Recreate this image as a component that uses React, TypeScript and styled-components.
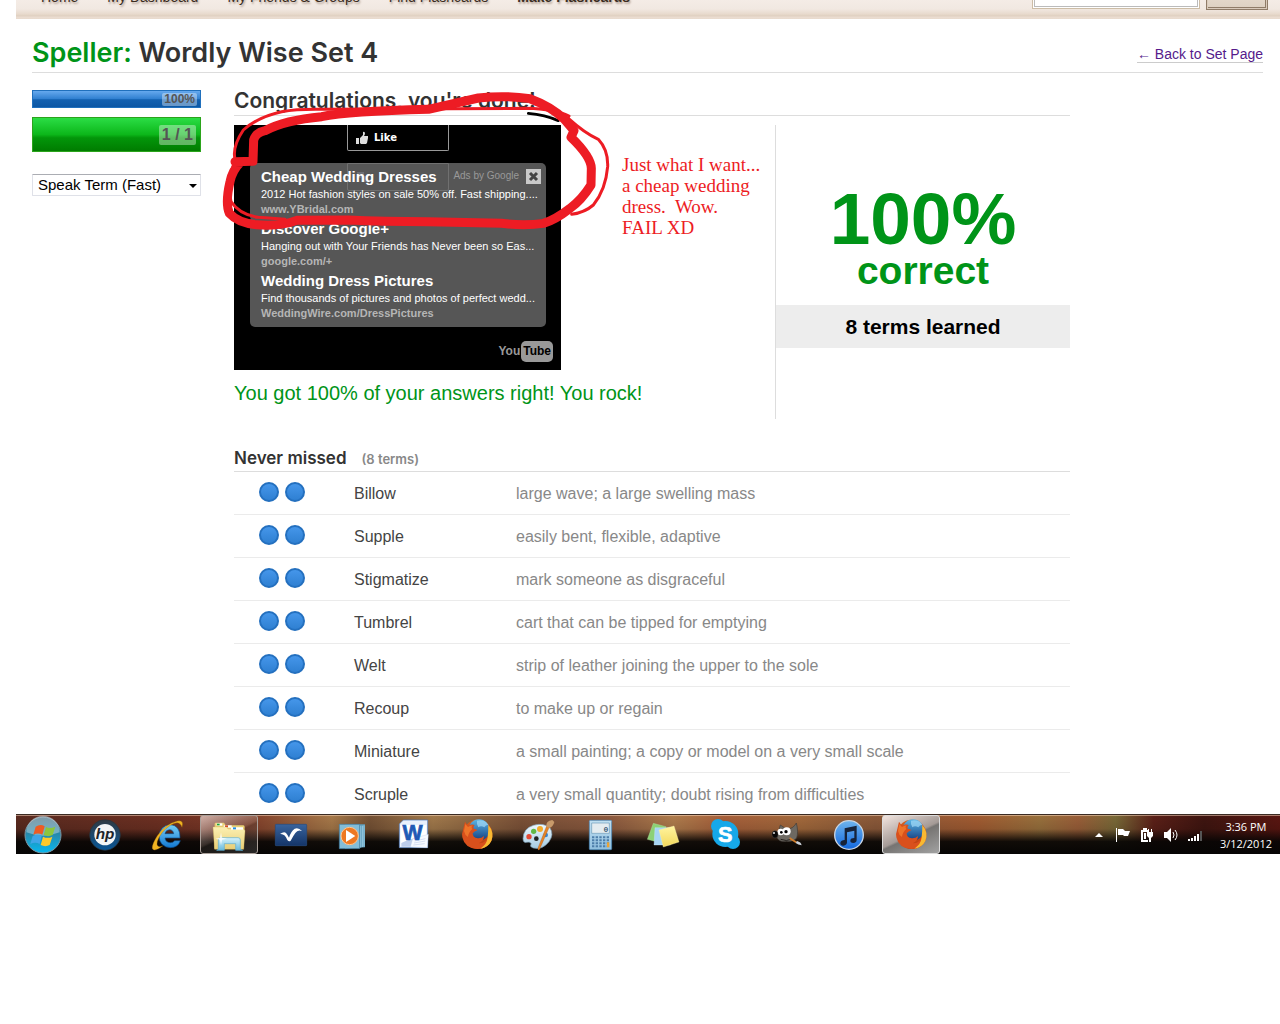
import React from "react";
import styled, { createGlobalStyle, css } from "styled-components";

const sans = `"Liberation Sans", Arial, sans-serif`;
const display = `"Century Gothic", Inter, sans-serif`;
const green = "#009418";

const GlobalStyle = createGlobalStyle`
  * { box-sizing: border-box; }
  body { margin: 0; background: #fff; font-family: ${sans}; color: #333; }
  h1, h2, h3, p { margin: 0; }
`;

const Screen = styled.div`
  margin-left: 16px;
`;

const TopBar = styled.header`
  display: flex;
  justify-content: space-between;
  align-items: flex-end;
  height: 19px;
  padding: 0 12px 0 25px;
  overflow: hidden;
  background: linear-gradient(#f4ece6 0, #f1e8e1 9px, #e8dacd 14px, #dfcfc0 16px, #ebddd1 17px, #e8dacd 19px);
`;

const Nav = styled.nav`
  display: flex;
  gap: 29px;
  padding-bottom: 12px;
`;

const NavLink = styled.a<{ $strong?: boolean }>`
  font-size: 14px;
  line-height: 20px;
  font-weight: ${(p) => (p.$strong ? 700 : 400)};
  color: #3a2c22;
  text-decoration: none;
  text-shadow: 1px 2px 2px rgba(90, 60, 40, 0.4);
`;

const Search = styled.form`
  display: flex;
  align-items: flex-end;
  gap: 6px;
  padding-bottom: 9px;
`;

const SearchBox = styled.input`
  width: 168px;
  height: 28px;
  margin-bottom: 1px;
  border: 1px solid #cdbda6;
  outline: 1px solid #bbb;
  outline-offset: -3px;
  background: #fff;
`;

const SearchButton = styled.button`
  width: 62px;
  height: 30px;
  border: 1px solid #8f7c68;
  box-shadow: inset 0 0 0 1px #d9cabb, inset -1px -1px 0 1px #8f7c68;
  background: linear-gradient(#eee4da, #ddd0c1);
`;

const Page = styled.main`
  padding: 17px 17px 0 16px;
`;

const TitleRow = styled.div`
  display: flex;
  justify-content: space-between;
  align-items: flex-start;
  height: 37px;
  border-bottom: 1px solid #ddd;
`;

const Title = styled.h1`
  font: 600 27px/34px ${display};
  span { color: ${green}; }
`;

const BackLink = styled.a`
  margin-top: 10px;
  font-size: 14px;
  line-height: 16px;
  color: #551a8b;
  text-decoration: none;
  border-bottom: 1px solid #ccc;
`;

const Columns = styled.div`
  display: flex;
  gap: 33px;
  padding-top: 17px;
`;

const Sidebar = styled.aside`
  flex: 0 0 169px;
`;

const Meter = styled.div<{ $big?: boolean }>`
  display: flex;
  justify-content: flex-end;
  align-items: center;
  font-weight: 700;
  color: #555;
  ${(p) =>
    p.$big
      ? css`
          height: 35px;
          margin: 9px 0 22px;
          padding-right: 4px;
          font-size: 16px;
          border: 1px solid #2ba41b;
          background: linear-gradient(#2bdd45 0, #0cb71a 50%, #03960a 60%, #007c00 100%);
        `
      : css`
          height: 18px;
          padding-right: 3px;
          font-size: 12px;
          border: 1px solid #2070bd;
          background: linear-gradient(#66a9ee 0, #2f7fd0 50%, #1361b0 54%, #0c57a4 100%);
        `}
`;

const MeterLabel = styled.span<{ $big?: boolean }>`
  border-radius: 2px;
  background: rgba(255, 255, 255, 0.38);
  padding: 0 ${(p) => (p.$big ? 3 : 2)}px;
  line-height: ${(p) => (p.$big ? 20 : 13)}px;
`;

const SelectWrap = styled.label`
  position: relative;
  display: block;
  &::after {
    content: "";
    position: absolute;
    right: 4px;
    top: 10px;
    border: 4px solid transparent;
    border-top-color: #000;
    border-bottom: 0;
  }
`;

const Select = styled.select`
  appearance: none;
  display: block;
  width: 100%;
  height: 22px;
  padding: 0 5px;
  border: 1px solid #dfe1e8;
  border-top-color: #abadb3;
  border-radius: 1px;
  background: #fff;
  color: #000;
  font: 15px/20px ${sans};
`;

const Results = styled.section`
  position: relative;
  flex: 1;
  max-width: 836px;
`;

const Heading = styled.h2`
  height: 26px;
  border-bottom: 1px solid #ddd;
  font: 600 21px/22px ${display};
`;

const Summary = styled.div`
  display: flex;
  height: 294px;
  margin-top: 9px;
`;

const SummaryMain = styled.div`
  flex: 1;
`;

const Video = styled.div`
  position: relative;
  width: 327px;
  height: 245px;
  background: #000;
`;

const VideoButton = styled.button<{ $lower?: boolean }>`
  position: absolute;
  left: 113px;
  top: ${(p) => (p.$lower ? 38 : 0)}px;
  display: flex;
  align-items: center;
  gap: 5px;
  width: 102px;
  height: ${(p) => (p.$lower ? 28 : 26)}px;
  padding: 0 7px;
  border: 1px solid #999;
  border-top-width: ${(p) => (p.$lower ? 1 : 0)}px;
  border-radius: 0 0 2px 2px;
  background: none;
  color: #fff;
  font: 700 10px/14px "DejaVu Sans", Verdana, sans-serif;
`;

const Ads = styled.div`
  position: absolute;
  left: 16px;
  top: 38px;
  width: 296px;
  height: 164px;
  padding: 4px 0 0 11px;
  border-radius: 5px;
  background: rgba(103, 103, 103, 0.83);
`;

const Ad = styled.div`
  height: 52px;
  white-space: nowrap;
`;

const AdTitle = styled.div`
  font: 700 15px/20px ${sans};
  color: #fff;
`;

const AdText = styled.div`
  font: 11px/15px ${sans};
  color: #fff;
`;

const AdUrl = styled.div`
  font: 700 11px/15px ${sans};
  color: #b5b5b5;
`;

const AdsBy = styled.div`
  position: absolute;
  right: 5px;
  top: 5px;
  display: flex;
  align-items: center;
  gap: 7px;
  font: 10px/16px ${sans};
  color: #999;
`;

const CloseButton = styled.button`
  display: grid;
  place-items: center;
  width: 15px;
  height: 15px;
  padding: 0;
  border: 0;
  background: #c9c9c9;
`;

const YouTube = styled.div`
  position: absolute;
  right: 8px;
  bottom: 8px;
  display: flex;
  align-items: center;
  gap: 1px;
  font: 700 12px/21px ${sans};
  color: #999;
  span {
    padding: 0 2px;
    border-radius: 5px;
    background: #999;
    color: #000;
  }
`;

const Praise = styled.p`
  margin-top: 12px;
  font-size: 20px;
  line-height: 23px;
  color: ${green};
`;

const Score = styled.div`
  flex: 0 0 295px;
  padding-top: 57px;
  border-left: 1px solid #ddd;
  text-align: center;
  font-weight: 700;
  color: ${green};
`;

const Percent = styled.div`
  font-size: 73px;
  line-height: 73px;
`;

const Correct = styled.div`
  font-size: 39px;
  line-height: 32px;
`;

const Learned = styled.div`
  margin-top: 18px;
  background: #ededed;
  color: #000;
  font-size: 21px;
  line-height: 43px;
`;

const ListHeading = styled.h3`
  display: flex;
  align-items: baseline;
  gap: 15px;
  height: 25px;
  margin-top: 27px;
  font: 600 17px/24px ${display};
  small { font-size: 13px; color: #888; }
`;

const Terms = styled.table`
  width: 100%;
  border-spacing: 0;
  table-layout: fixed;
  border-top: 1px solid #ddd;
  font-size: 16px;
  line-height: 20px;
  td { height: 43px; padding: 12px 0 0; vertical-align: top; color: #888; border-bottom: 1px solid #ebebeb; }
  td:first-child { width: 120px; padding: 10px 0 0 25px; }
  td:nth-child(2) { width: 162px; color: #444; }
  tr:last-child td { height: 41px; border: 0; }
`;

const Dots = styled.span`
  display: flex;
  gap: 6px;
`;

const Dot = styled.i`
  width: 20px;
  height: 20px;
  border: 2px solid #2470bf;
  border-radius: 50%;
  background: linear-gradient(#4596ea, #2f80d2);
`;

const Scribble = styled.svg`
  position: absolute;
  left: -19px;
  top: -10px;
  width: 400px;
  height: 180px;
  pointer-events: none;
`;

const Note = styled.p`
  position: absolute;
  left: 388px;
  top: 64px;
  font: 19px/21px "Liberation Serif", "Times New Roman", serif;
  white-space: pre;
  color: #ed1c24;
`;

const Taskbar = styled.footer`
  display: flex;
  justify-content: space-between;
  height: 40px;
  border-top: 1px solid #3b2b23;
  box-shadow: inset 0 1px 0 rgba(255, 225, 200, 0.5);
  background:
    linear-gradient(rgba(0, 0, 0, 0) 0, rgba(0, 0, 0, 0.12) 36%, rgba(6, 5, 4, 0.93) 68%, #060504 100%),
    linear-gradient(90deg, #5b2b20 0, #6d3022 11%, #813b28 18%, #a87a4a 25%, #765235 28%, #a27a4c 33%, #7c5238 40%, #8e5b40 47%, #b07d4d 52%, #a8603b 56%, #a46a3c 62%, #8c5a3a 68%, #a35c32 76%, #99713d 81%, #9b5f39 84%, #7a6a38 87%, #5c2018 90%, #3f1510 94%, #5a1611 100%);
`;

const Apps = styled.div`
  display: flex;
`;

const AppButton = styled.button<{ $kind?: "start" | "open" | "front" }>`
  display: grid;
  place-items: center;
  width: ${(p) => (p.$kind === "start" ? 54 : 58)}px;
  height: 39px;
  margin: 0 ${(p) => (p.$kind === "start" ? 4 : 2)}px 0 ${(p) => (p.$kind === "start" ? 0 : 2)}px;
  padding: 0;
  border: 1px solid transparent;
  border-radius: 3px;
  background: none;
  ${(p) =>
    p.$kind === "open" &&
    css`
      border-color: #aaa09a;
      background: linear-gradient(155deg, rgba(255, 240, 235, 0.65), rgba(160, 140, 130, 0.3) 48%, rgba(70, 65, 60, 0.3) 52%, rgba(120, 120, 120, 0.3));
    `}
  ${(p) =>
    p.$kind === "front" &&
    css`
      border-color: #ddd;
      background: linear-gradient(155deg, #f3e5df, #a49a96 50%, #767472 54%, #a2a2a2);
    `}
`;

const Icon = styled.svg`
  display: block;
  width: 40px;
  height: 40px;
  margin: -2px 0;
`;

const Tray = styled.div`
  display: flex;
  align-items: center;
  gap: 8px;
  padding-right: 8px;
`;

const TrayIcon = styled.svg`
  width: 16px;
  height: 16px;
  fill: #fff;
`;

const Clock = styled.time`
  margin-left: 9px;
  text-align: center;
  color: #fff;
  font: 11px/17px "Open Sans", "Noto Sans", sans-serif;
`;

const terms = [
  ["Billow", "large wave; a large swelling mass"],
  ["Supple", "easily bent, flexible, adaptive"],
  ["Stigmatize", "mark someone as disgraceful"],
  ["Tumbrel", "cart that can be tipped for emptying"],
  ["Welt", "strip of leather joining the upper to the sole"],
  ["Recoup", "to make up or regain"],
  ["Miniature", "a small painting; a copy or model on a very small scale"],
  ["Scruple", "a very small quantity; doubt rising from difficulties"],
];

const ads = [
  ["Cheap Wedding Dresses", "2012 Hot fashion styles on sale 50% off. Fast shipping....", "www.YBridal.com"],
  ["Discover Google+", "Hanging out with Your Friends has Never been so Eas...", "google.com/+"],
  ["Wedding Dress Pictures", "Find thousands of pictures and photos of perfect wedd...", "WeddingWire.com/DressPictures"],
];

const Firefox = () => (
  <>
    <circle cx="62" cy="58" r="44" fill="url(#ffOrange)" />
    <circle cx="66" cy="45" r="32" fill="url(#ffBlue)" />
    <path d="M60 17q22-5 34 12-8 0-12 8-10-6-18 0-6-10-4-20z" fill="#9ed5f4" opacity=".75" />
    <path d="M18 46l6-26 9 13q10-7 20-3-5 5-3 11 8 1 11 5-9 3-14 9 0 14 15 15 11 1 19-7 0 16-16 22 24 1 31-27 2-14-2-28 16 24 10 46-12 26-43 26-38-2-45-35-2-12 2-21z" fill="#d9501c" />
    <path d="M94 30q19 22 9 48-9 19-33 23 20-13 22-34 2-18 2-37z" fill="#f9b932" />
    <path d="M21 48l4-21 8 9q8-5 14-5-6 6-1 11-12 10-13 24-10-6-12-18z" fill="#ee7429" />
  </>
);

const appIcons: { name: string; kind?: "start" | "open" | "front"; art: React.ReactNode }[] = [
  {
    name: "Start",
    kind: "start",
    art: (
      <>
        <circle cx="60" cy="60" r="54" fill="url(#orb)" stroke="#7d96a3" strokeWidth="3" />
        <path d="M10 52a50 50 0 01100 0q-50 20-100 0z" fill="#dcecf4" opacity=".42" />
        <path d="M38 35q14-9 27-1l-7 25q-13-7-27 0z" fill="#ee5b24" />
        <path d="M69 36q12 7 28-1l-8 25q-13 7-27 0z" fill="#8cc63e" />
        <path d="M29 63q14-8 27 0l-6 24q-13-7-28 0z" fill="#3fa5e8" />
        <path d="M60 65q14 7 28 0l-8 25q-13 7-27 0z" fill="#fdc92b" />
      </>
    ),
  },
  {
    name: "HP",
    art: (
      <>
        <circle cx="60" cy="60" r="46" fill="url(#hp)" stroke="#29333b" strokeWidth="2" />
        <circle cx="60" cy="59" r="32" fill="#f3f5f6" />
        <text x="60" y="72" textAnchor="middle" fontFamily="Liberation Sans" fontWeight="700" fontStyle="italic" fontSize="46" fill="#1c2429">hp</text>
      </>
    ),
  },
  {
    name: "Internet Explorer",
    art: (
      <>
        <path d="M99 69H54q2 14 16 14 9 0 13-6h17q-7 21-30 21-32-2-34-34 2-32 34-35 30 2 29 40zM54 56h26q-2-12-13-12-11 1-13 12z" fill="url(#ie)" stroke="#0a4b8a" strokeWidth="2" />
        <path d="M105 37q7-23-14-19-35 8-60 44-26 42-8 43 10-1 24-12-21 8-16-14 11-30 39-48 27-18 35 6z" fill="#f0b322" stroke="#9b6a0a" strokeWidth="1" />
      </>
    ),
  },
  {
    name: "Windows Explorer",
    kind: "open",
    art: (
      <>
        <path d="M17 27q0-4 4-4h24l5 8h53q4 0 4 5l-4 65H16z" fill="#e8cf74" />
        <path d="M23 25h17v7H23z" fill="#fff" /><path d="M24 26h8v5h-8z" fill="#19a63a" />
        <path d="M44 31h24v7H44z" fill="#fff" /><path d="M48 31h9v6h-9z" fill="#d44b24" />
        <path d="M66 37h36v8H66z" fill="#fff" /><path d="M72 37h9v6h-9z" fill="#268de0" />
        <path d="M12 36h40l5 6h47l4 5-4 56H17z" fill="url(#folder)" stroke="#d6b95a" />
        <path d="M66 38h36v6H66z" fill="#fff" /><path d="M72 38h9v5h-9z" fill="#268de0" />
        <path d="M28 103V75q0-7 7-7h52q7 0 7 7v28l7 3H80V86H46v20H23z" fill="url(#glass)" stroke="#5eaed0" strokeWidth="2" />
        <path d="M36 52l3 16 15 3-15 3-3 17-3-17-14-3 14-3z" fill="#fff" opacity=".8" />
      </>
    ),
  },
  {
    name: "Tasks",
    art: (
      <>
        <rect x="13" y="28" width="94" height="64" rx="2" fill="url(#navy)" stroke="#254b80" strokeWidth="2" />
        <path d="M27 57q12-9 18-3 5 6 9 14 6-20 17-27 11-5 22 7-13-5-20 6-6 8-14 23-5 4-10-2-7-20-22-18z" fill="#fff" />
      </>
    ),
  },
  {
    name: "Media Player",
    art: (
      <>
        <path d="M36 28h60v69l-60 4z" fill="#5d9dbc" /><path d="M88 32v64M93 31v64M83 32v66" stroke="#b8e1f1" strokeWidth="2" />
        <path d="M19 28h61v73H19z" fill="#83bdd8" stroke="#3e7ba1" strokeWidth="2" />
        <circle cx="50" cy="63" r="26" fill="#ed7821" stroke="#ffc48c" strokeWidth="3" />
        <path d="M39 45l28 18-28 18z" fill="#fff" />
      </>
    ),
  },
  {
    name: "Word",
    art: (
      <>
        <path d="M25 15h73v83H13V27z" fill="#e8f0fc" stroke="#4876b9" strokeWidth="2" />
        <path d="M17 30h77v64H17z" fill="#fff" />
        <path d="M19 84q40-20 75-14v25H19z" fill="#bdcdea" />
        <path d="M53 71l47-13-3 40-51-2z" fill="#f7faff" stroke="#b1c4e6" /><path d="M59 78l32-7M57 84l34-6M55 90l34-4" stroke="#c3d0ea" strokeWidth="2" />
        <text x="53" y="75" textAnchor="middle" fontFamily="Liberation Sans" fontWeight="700" fontSize="64" fill="#2059b5" stroke="#2059b5" strokeWidth="2">W</text>
      </>
    ),
  },
  { name: "Firefox", art: <Firefox /> },
  {
    name: "Paint",
    art: (
      <>
        <path d="M12 71q1-31 31-40 31-9 50 8 13 19-3 41-21 26-47 19-13-4-6-13-5-7-14-4-10 3-11-11z" fill="url(#palette)" stroke="#7998ad" strokeWidth="2" />
        <circle cx="52" cy="71" r="7" fill="#222" />
        <circle cx="30" cy="65" r="8" fill="#e44a35" /><circle cx="44" cy="49" r="8" fill="#62b846" />
        <circle cx="63" cy="42" r="9" fill="#f3ab2d" /><circle cx="80" cy="60" r="7" fill="#3486d2" />
        <path d="M91 36L61 104q-5 4-4-5L83 33z" fill="#e68426" stroke="#9a4f18" />
        <path d="M82 35q-2-18 18-20l6 6q-4 15-15 18z" fill="#c89a6a" />
      </>
    ),
  },
  {
    name: "Calculator",
    art: (
      <>
        <rect x="25" y="16" width="67" height="88" rx="3" fill="url(#calc)" stroke="#4685b8" strokeWidth="2" />
        <path d="M32 24h53v31H32z" fill="#e4ecf0" stroke="#6c9ab8" strokeWidth="2" />
        <text x="82" y="50" textAnchor="end" fontFamily="Liberation Mono" fontWeight="700" fontSize="24" fill="#42617c">0</text>
        <path d="M33 67h53M33 76h53M33 85h53M33 94h45" stroke="#4e7faa" strokeWidth="6" strokeDasharray="7 4" />
        <path d="M78 82h7v15h-7z" fill="#eda332" />
      </>
    ),
  },
  {
    name: "Sticky Notes",
    art: (
      <>
        <path d="M31 25l38 10-18 48-38-10z" fill="#8cd175" stroke="#b9e9a8" />
        <path d="M36 38h46v52H33z" fill="#a7d5f4" stroke="#d2edff" />
        <path d="M48 45l45-12 15 48-47 15z" fill="url(#note)" stroke="#fff5b0" />
      </>
    ),
  },
  {
    name: "Skype",
    art: (
      <>
        <g fill="#16a8e9"><circle cx="61" cy="57" r="39" /><circle cx="39" cy="33" r="21" /><circle cx="84" cy="81" r="21" /></g>
        <text x="61" y="80" textAnchor="middle" fontFamily="Liberation Sans" fontWeight="700" fontSize="65" fill="#fff" stroke="#fff" strokeWidth="2">S</text>
      </>
    ),
  },
  {
    name: "GIMP",
    art: (
      <>
        <path d="M34 53l6-23 18 12q20 1 30-18 7 27 1 45-10 12-31 10-19 3-28-10z" fill="#6d6962" stroke="#3f3b37" strokeWidth="2" />
        <circle cx="41" cy="51" r="10" fill="#fff" /><circle cx="59" cy="49" r="12" fill="#fff" />
        <circle cx="43" cy="52" r="4" /><circle cx="57" cy="50" r="5" />
        <ellipse cx="24" cy="58" rx="9" ry="11" fill="#070707" stroke="#555" /><circle cx="21" cy="54" r="3" fill="#ddd" />
        <path d="M41 73q18 7 31 0" fill="none" stroke="#282421" strokeWidth="3" />
        <path d="M69 67l21 13-3 5-20-13z" fill="#d07e2c" /><path d="M90 78q12 3 14 13-11-2-18-7z" fill="#ccd2d9" />
      </>
    ),
  },
  {
    name: "iTunes",
    art: (
      <>
        <circle cx="60" cy="60" r="43" fill="url(#itunes)" stroke="#cbd5e1" strokeWidth="4" />
        <path d="M47 40l36-8v43q0 8-10 9-10 0-9-8 1-7 12-7V47l-22 5v30q0 9-11 10-10-1-9-9 2-8 13-8z" fill="#16233a" />
      </>
    ),
  },
  { name: "Firefox window", kind: "front", art: <Firefox /> },
];

const Gradient = ({ id, from, to }: { id: string; from: string; to: string }) => (
  <linearGradient id={id} x1="0" y1="0" x2="0" y2="1">
    <stop offset="0" stopColor={from} />
    <stop offset="1" stopColor={to} />
  </linearGradient>
);

const Defs = styled.svg`
  position: absolute;
  width: 0;
  height: 0;
`;

export default function App() {
  return (
    <>
      <GlobalStyle />
      <Defs aria-hidden="true">
        <defs>
          <Gradient id="orb" from="#406072" to="#08b8ef" />
          <Gradient id="hp" from="#303a42" to="#085697" />
          <Gradient id="ie" from="#78cdf4" to="#1279d2" />
          <Gradient id="folder" from="#fcf0b2" to="#e8ce77" />
          <Gradient id="glass" from="#d8f4fc" to="#68b9dc" />
          <Gradient id="navy" from="#39639c" to="#143569" />
          <Gradient id="ffOrange" from="#d9601c" to="#b93c10" />
          <Gradient id="ffBlue" from="#5cb6e7" to="#133e80" />
          <Gradient id="palette" from="#edf8ff" to="#a4cbe2" />
          <Gradient id="calc" from="#c1e0f2" to="#91c0df" />
          <Gradient id="note" from="#fff5a0" to="#f3d75b" />
          <Gradient id="itunes" from="#6fb5ee" to="#1267dd" />
        </defs>
      </Defs>
      <Screen>
        <TopBar>
          <Nav>
            <NavLink href="#home">Home</NavLink>
            <NavLink href="#dashboard">My Dashboard</NavLink>
            <NavLink href="#groups">My Friends &amp; Groups</NavLink>
            <NavLink href="#find">Find Flashcards</NavLink>
            <NavLink href="#make" $strong>Make Flashcards</NavLink>
          </Nav>
          <Search>
            <SearchBox type="search" aria-label="Search flashcards" />
            <SearchButton type="button" aria-label="Search" />
          </Search>
        </TopBar>
        <Page>
          <TitleRow>
            <Title><span>Speller:</span> Wordly Wise Set 4</Title>
            <BackLink href="#set">← Back to Set Page</BackLink>
          </TitleRow>
          <Columns>
            <Sidebar>
              <Meter><MeterLabel>100%</MeterLabel></Meter>
              <Meter $big><MeterLabel $big>1 / 1</MeterLabel></Meter>
              <SelectWrap>
                <Select aria-label="Speech mode"><option>Speak Term (Fast)</option></Select>
              </SelectWrap>
            </Sidebar>
            <Results>
              <Heading>Congratulations, you're done!</Heading>
              <Summary>
                <SummaryMain>
                  <Video>
                    <VideoButton>
                      <svg width="14" height="14" viewBox="0 0 14 14" aria-hidden="true">
                        <path d="M1 7h3v6H1zM5 7l3-3V1q2-1 2 2L9 5h4v2l-1 5-1 1H6l-1-1z" fill="#ddd" />
                      </svg>
                      Like
                    </VideoButton>
                    <VideoButton $lower aria-label="Share">
                      <svg width="14" height="14" viewBox="0 0 14 14" aria-hidden="true">
                        <path d="M2 2h7v6H2zM6 6h7v6H6z" fill="#8897b8" />
                      </svg>
                    </VideoButton>
                    <Ads>
                      {ads.map(([title, text, url]) => (
                        <Ad key={url}>
                          <AdTitle>{title}</AdTitle>
                          <AdText>{text}</AdText>
                          <AdUrl>{url}</AdUrl>
                        </Ad>
                      ))}
                      <AdsBy>
                        Ads by Google
                        <CloseButton aria-label="Close ads">
                          <svg width="11" height="11" viewBox="0 0 11 11" aria-hidden="true">
                            <path d="M2 2l7 7M9 2l-7 7" stroke="#444" strokeWidth="3" />
                          </svg>
                        </CloseButton>
                      </AdsBy>
                    </Ads>
                    <YouTube>You<span>Tube</span></YouTube>
                  </Video>
                  <Praise>You got 100% of your answers right! You rock!</Praise>
                </SummaryMain>
                <Score>
                  <Percent>100%</Percent>
                  <Correct>correct</Correct>
                  <Learned>8 terms learned</Learned>
                </Score>
              </Summary>
              <ListHeading>Never missed <small>(8 terms)</small></ListHeading>
              <Terms>
                <tbody>
                  {terms.map(([term, meaning]) => (
                    <tr key={term}>
                      <td><Dots><Dot /><Dot /></Dots></td>
                      <td>{term}</td>
                      <td>{meaning}</td>
                    </tr>
                  ))}
                </tbody>
              </Terms>
              <Scribble viewBox="0 0 1200 540" fill="none" strokeLinecap="round" strokeLinejoin="round" aria-hidden="true">
                <path d="M940 100q50 4 90 22M58 398q20 14 45 18" stroke="#000" strokeWidth="8" />
                <path d="M62 245Q48 205 85 150Q130 110 200 95Q250 86 330 88L935 85Q1020 88 1062 108M1060 115Q1110 160 1150 178Q1180 210 1178 260Q1172 330 1135 375Q1110 397 1070 403M60 240Q35 310 48 365Q75 405 130 412L210 418" stroke="#ed1c24" strokeWidth="9" />
                <path d="M60 245L114 244L116 180Q122 158 150 152Q210 120 320 110Q400 94 640 88Q720 70 790 54Q870 45 945 56Q1010 80 1048 118L1077 152L1068 172Q1128 230 1129 265L1128 315Q1100 360 1065 385Q1020 420 985 430Q930 438 860 430L640 425Q500 425 400 420L245 421Q195 440 125 434Q70 430 43 400Q30 370 45 305Q52 270 78 245" stroke="#ed1c24" strokeWidth="27" />
              </Scribble>
              <Note>{"Just what I want...\na cheap wedding\ndress.  Wow.\nFAIL XD"}</Note>
            </Results>
          </Columns>
        </Page>
        <Taskbar>
          <Apps>
            {appIcons.map(({ name, kind, art }) => (
              <AppButton key={name} $kind={kind} aria-label={name}>
                <Icon viewBox="0 0 120 120" aria-hidden="true">{art}</Icon>
              </AppButton>
            ))}
          </Apps>
          <Tray>
            <TrayIcon viewBox="0 0 16 16"><path d="M4 10l4-4 4 4z" /></TrayIcon>
            <TrayIcon viewBox="0 0 16 16"><path d="M1 1h1v14H1zM3 2h5l2 2h5l-2 5H9L8 8H3z" /></TrayIcon>
            <TrayIcon viewBox="0 0 16 16">
              <path d="M2 3h2V1h4v2h1v2H4v8h5v2H2z" /><path d="M8 5h1V2h1v3h2V2h1v3h1v4l-2 2v4h-2v-4L8 9z" /><path d="M5 6h2v6H5z" />
            </TrayIcon>
            <TrayIcon viewBox="0 0 16 16">
              <path d="M1 5h3l4-4v14l-4-4H1z" /><path d="M10 5q2 3 0 6M12 3q4 5 0 10" fill="none" stroke="#fff" />
            </TrayIcon>
            <TrayIcon viewBox="0 0 16 16">
              <path d="M1 12h2v2H1zM4 11h2v3H4zM7 9h2v5H7zM10 7h2v7h-2z" /><path d="M13 4h2v10h-2z" fill="#555" />
            </TrayIcon>
            <Clock>3:36 PM<br />3/12/2012</Clock>
          </Tray>
        </Taskbar>
      </Screen>
    </>
  );
}
